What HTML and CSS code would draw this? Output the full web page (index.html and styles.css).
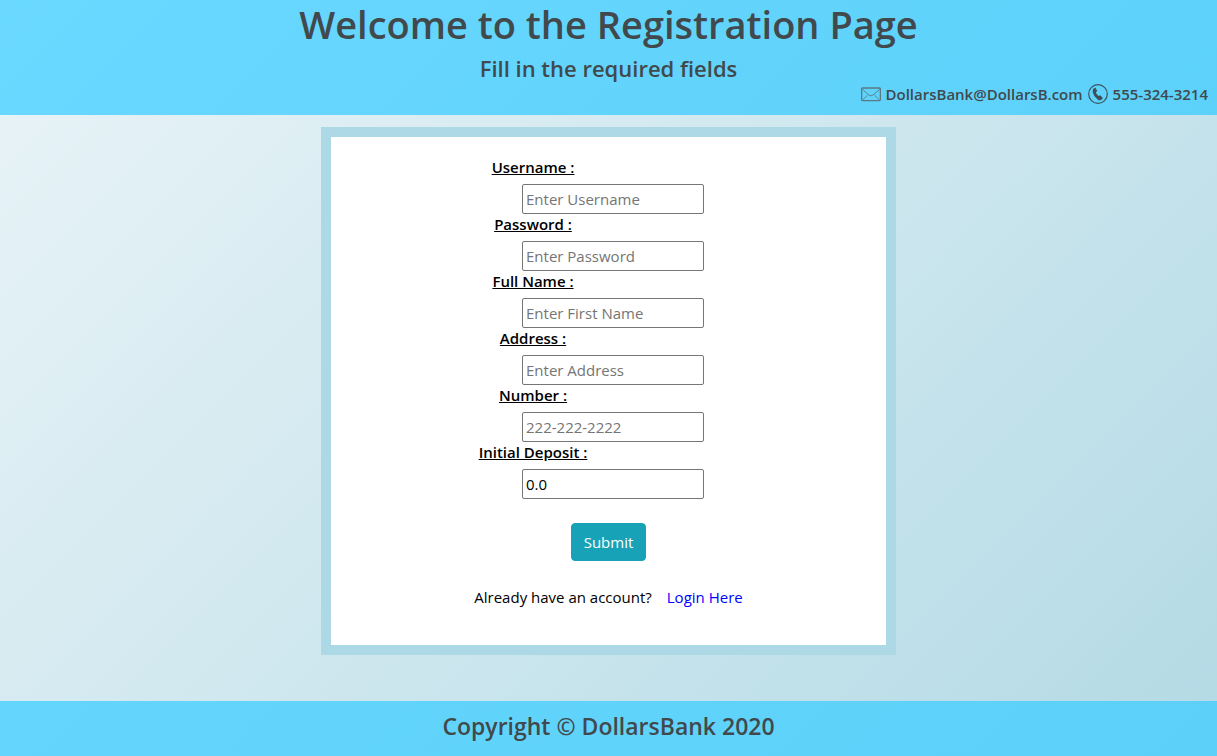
FILE: index.html
```html
<!DOCTYPE html>
<html lang="en">
<head>
<meta charset="utf-8">
<meta name="viewport" content="width=device-width, initial-scale=1">
<title>DollarsBank Registration</title>
<link rel="stylesheet" href="styles.css">
</head>
<body>
<header class="banner">
  <h1 class="banner-title">Welcome to the Registration Page</h1>
  <h2 class="banner-subtitle">Fill in the required fields</h2>
  <div class="contact">
    <svg class="contact-icon" viewBox="0 0 20 20" aria-hidden="true" fill="none" stroke="#5b7885">
      <rect x="0.6" y="4" width="18.8" height="12.6" rx="1.4" stroke-width="1.4"/>
      <path d="M1.500 5.500l6.600 5.600q1.900 1.500 3.800 0L18.500 5.500M2 15.500l4.500-4.400M18 15.500l-4.500-4.400" stroke-width="0.9"/>
    </svg>
    <span>DollarsBank@DollarsB.com</span>
    <svg class="contact-icon" viewBox="0 0 20 20" aria-hidden="true">
      <circle cx="10" cy="10" r="9.3" fill="none" stroke="#3d5560" stroke-width="1.2"/>
      <path d="M5.600 4.500L7.200 3.600L9.300 7L7.800 8.300Q8.500 10.700 10.600 12.100L12.200 11.300L14.900 14L13.700 15.600Q12.200 17 9.600 15.400Q5.800 12.700 4.800 8.400Q4.400 5.800 5.600 4.500Z" fill="#3d5058"/>
    </svg>
    <span>555-324-3214</span>
  </div>
</header>
<main class="content">
  <form class="card">
    <div class="field">
      <label class="field-label" for="username">Username :</label>
      <input class="field-input" id="username" type="text" placeholder="Enter Username">
    </div>
    <div class="field">
      <label class="field-label" for="password">Password :</label>
      <input class="field-input" id="password" type="password" placeholder="Enter Password">
    </div>
    <div class="field">
      <label class="field-label" for="fullname">Full Name :</label>
      <input class="field-input" id="fullname" type="text" placeholder="Enter First Name">
    </div>
    <div class="field">
      <label class="field-label" for="address">Address :</label>
      <input class="field-input" id="address" type="text" placeholder="Enter Address">
    </div>
    <div class="field">
      <label class="field-label" for="number">Number :</label>
      <input class="field-input" id="number" type="tel" placeholder="222-222-2222">
    </div>
    <div class="field">
      <label class="field-label" for="deposit">Initial Deposit :</label>
      <input class="field-input" id="deposit" type="text" value="0.0">
    </div>
    <button class="submit" type="submit">Submit</button>
    <p class="login"><span>Already have an account?</span><a class="login-link" href="#">Login Here</a></p>
  </form>
</main>
<footer class="footer">Copyright © DollarsBank 2020</footer>
</body>
</html>
```
FILE: styles.css
```css
*, *::before, *::after {
  box-sizing: border-box;
}

body {
  margin: 0;
  min-height: 100vh;
  display: flex;
  flex-direction: column;
  font-family: "Segoe UI", "Open Sans", "Noto Sans", sans-serif;
  font-size: 15px;
  line-height: 24px;
  color: #000;
  background: linear-gradient(135deg, #eaf4f8, #b3dae5);
}

.banner,
.footer {
  color: #41494c;
  font-weight: 600;
  text-align: center;
}

.banner {
  padding-bottom: 9px;
  background: linear-gradient(135deg, #6ad8ff, #5cd1fa);
}

.banner-title {
  margin: 0 0 6px;
  font-size: 38px;
  font-weight: 600;
  line-height: 48px;
}

.banner-subtitle {
  margin: 0;
  font-size: 22px;
  font-weight: 600;
  line-height: 28px;
}

.contact {
  display: flex;
  justify-content: flex-end;
  align-items: center;
  gap: 5px;
  padding-right: 9px;
}

.contact-icon {
  width: 20px;
  height: 20px;
}

.content {
  flex: 1;
  padding: 12px 16px 46px;
}

.card {
  width: 100%;
  max-width: 575px;
  margin: 0 auto;
  padding: 18px 16px 36px;
  border: 10px solid #add8e6;
  background: #fff;
  display: flex;
  flex-direction: column;
  align-items: center;
}

.field {
  width: 100%;
  display: flex;
  flex-direction: column;
  align-items: center;
}

.field-label {
  margin: 0 151px 5px 0;
  font-weight: 600;
  text-decoration: underline;
}

.field-input {
  width: 182px;
  height: 30px;
  margin: 0 0 -2px 9px;
  padding: 1px 3px;
  border: 1px solid #767676;
  border-radius: 2px;
  background: #fff;
  color: #000;
  font: inherit;
}

.field-input::placeholder {
  color: #757575;
  opacity: 1;
}

.submit {
  margin-top: 26px;
  padding: 6px 12px;
  border: 1px solid #17a2b8;
  border-radius: 4px;
  background: #17a2b8;
  color: #fff;
  font: inherit;
}

.login {
  display: flex;
  gap: 15px;
  margin: 24px 0 0;
}

.login-link {
  color: #00f;
  text-decoration: none;
}

.footer {
  padding: 9px 16px 14px;
  font-size: 23px;
  line-height: 32px;
  background: linear-gradient(135deg, #64d6fd, #5cd0f9);
}
```
